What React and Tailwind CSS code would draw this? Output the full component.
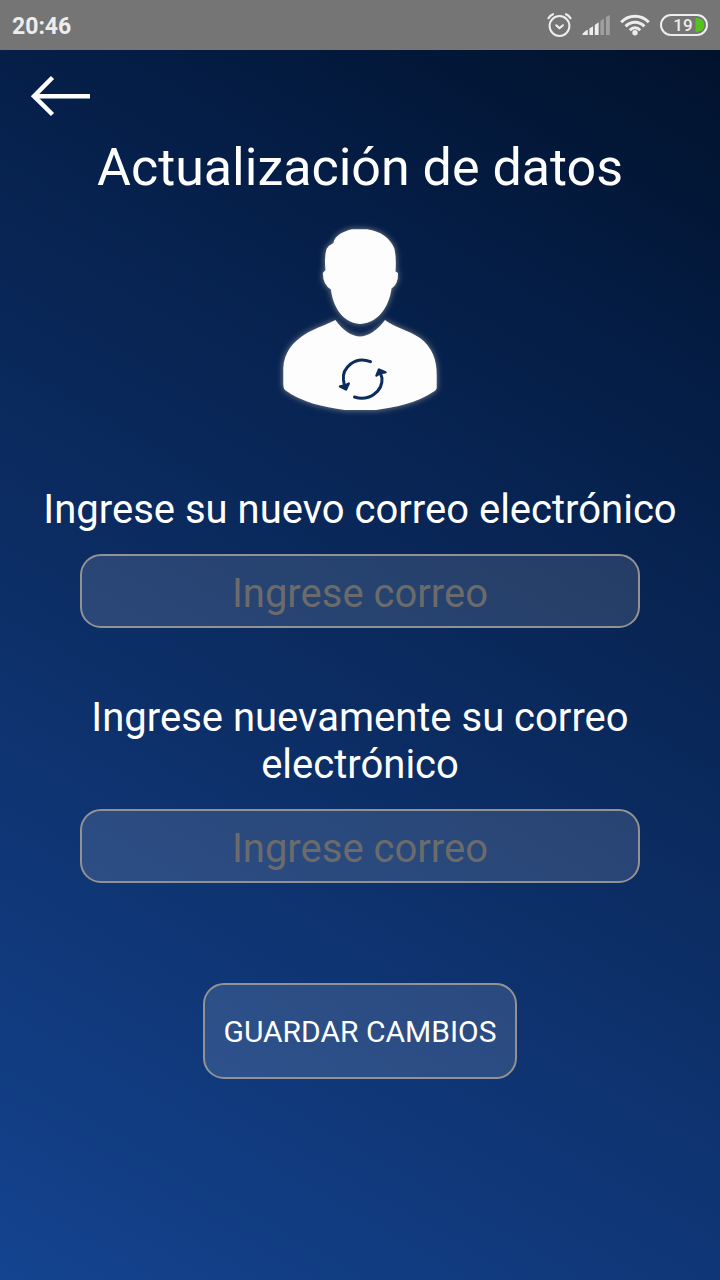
import React from "react";

function AlarmIcon() {
  return (
    <svg width="26" height="26" viewBox="0 0 26 26" fill="none" stroke="#ededed" strokeLinecap="round" aria-hidden="true">
      <circle cx="13.500" cy="14" r="9.900" strokeWidth="2" />
      <path d="M10.300 13.300l3.200 3 3.400-3" strokeWidth="2.200" strokeLinejoin="round" />
      <path d="M2.500 6.200Q4 3.500 7 2.200M24.500 6.200Q23 3.500 20 2.200" strokeWidth="2.200" />
    </svg>
  );
}

function SignalIcon() {
  return (
    <svg width="28" height="20" viewBox="0 0 28 20" aria-hidden="true">
      <path d="M0.500 20v-1.200L4 15.600 5.800 14.800v5.200zM7.400 20v-6.400L11 11.200V20zM12.800 20V10L16.600 7.200V20z" fill="#ededed" />
      <path d="M18.400 20V6L21.900 3.600V20zM24 20V2L27.800 0v20z" fill="#a0a0a0" />
    </svg>
  );
}

function WifiIcon() {
  return (
    <svg width="30" height="22" viewBox="0 0 30 22" fill="none" stroke="#ededed" strokeWidth="3" aria-hidden="true">
      <path d="M1.200 8.200C8.800 .2 21.200 .2 28.800 8.200" />
      <path d="M5.600 12.400C10.800 7 19.200 7 24.400 12.400" />
      <path d="M9.800 16.200C12.800 13 17.200 13 20.200 16.200" />
      <circle cx="15" cy="18.700" r="2.700" fill="#ededed" stroke="none" />
    </svg>
  );
}

function BatteryIcon() {
  return (
    <svg width="48" height="22" viewBox="0 0 48 22" role="img" aria-label="19">
      <rect x="1" y="1" width="46" height="20" rx="10" fill="none" stroke="#ededed" strokeWidth="2" />
      <path d="M35.500 4H37q7.300 1 7.300 7T37 18h-1.500z" fill="#55c41a" />
      <text x="23" y="17" textAnchor="middle" fontFamily="Roboto, sans-serif" fontSize="17" fontWeight="500" fill="#ededed">19</text>
    </svg>
  );
}

function StatusBar() {
  return (
    <div className="flex h-[50px] items-center justify-between bg-[#757575] px-3 font-bold text-[#ededed]">
      <span className="pt-1 text-[23px] leading-8">20:46</span>
      <div className="flex items-center gap-[10px]">
        <AlarmIcon />
        <SignalIcon />
        <WifiIcon />
        <BatteryIcon />
      </div>
    </div>
  );
}

function UserUpdateIcon() {
  return (
    <svg width="180" height="205" viewBox="0 0 180 205" className="mx-auto block" aria-hidden="true">
      <defs>
        <filter id="glow" x="-10%" y="-10%" width="120%" height="120%">
          <feDropShadow dx="0" dy="0" stdDeviation="3" floodColor="#d8cbb8" floodOpacity="0.6" />
        </filter>
      </defs>
      <g fill="#fdfdfd" filter="url(#glow)">
        <path d="M82 14.300H97C111 16 121 24 124.500 34Q126.500 43 125.500 56.500L128 58Q128.500 69 121.500 73.500C120 87 111 108 90 109C71 108 62 88 61 74.500Q53 70 52.800 58L55.500 55Q54 42 56.500 34Q59 30 63.500 28C64 21 74 16 82 14.300Z" />
        <path d="M65.500 105C72 115 82 121.500 90 121.500S108 115 115 105C124 112 138 115 150 123C162 132 167 145 166.700 160V172Q167 175 163 177C147 188 126 192 106 195H75C53 192 31 187 15 175Q13 173 13.300 166V153C14 138 22 127 37 118C48 112 56 110 65.500 105Z" />
      </g>
      <g stroke="#0d2c5e" strokeWidth="3" fill="none" strokeLinecap="round">
        <path d="M100.500 146.700C85 140.500 72 153 73.500 165L74.500 171" />
        <path d="M84.500 182C99 187 113 176 112 163L109.500 155.500" />
      </g>
      <g fill="#0d2c5e" stroke="#0d2c5e" strokeWidth="2.400" strokeLinejoin="round" strokeLinecap="round">
        <path d="M70 171.500L76 174.500 78.800 168.500 75 170.500Z" />
        <path d="M106.500 160.500L109 154.500 115.500 157.300 110.500 158Z" />
      </g>
    </svg>
  );
}

function EmailField({ id, label }) {
  return (
    <div className="flex flex-col gap-[21px]">
      <label htmlFor={id} className="px-10 text-center text-[40px] leading-[47px]">
        {label}
      </label>
      <div className="px-20">
        <input
          id={id}
          type="email"
          placeholder="Ingrese correo"
          className="block h-[74px] w-full rounded-[21px] border-2 border-[#929292] bg-white/12 px-5 pt-1 text-center text-[40px] text-white outline-none placeholder:text-[#6b6b6b]"
        />
      </div>
    </div>
  );
}

export default function App() {
  return (
    <div className="flex min-h-screen flex-col font-[Roboto,sans-serif] text-white">
      <StatusBar />
      <main className="flex-1 bg-[linear-gradient(30deg,#14438f_0%,#0b2b60_50%,#051f49_75%,#01122c_100%)] pb-12">
        <div className="flex px-[30px] pt-[25px]">
          <button type="button" aria-label="Volver">
            <svg width="60" height="42" viewBox="0 0 60 42" fill="none" stroke="#fff" strokeWidth="4.500" aria-hidden="true">
              <path d="M60 21.300H4" />
              <path d="M22.500 2.500L4 21.200 22.500 39.500" />
            </svg>
          </button>
        </div>
        <h1 className="mt-5 text-center text-[52px] leading-[62px]">Actualización de datos</h1>
        <div className="mt-4">
          <UserUpdateIcon />
        </div>
        <form className="mt-[66px] flex flex-col" onSubmit={(e) => e.preventDefault()}>
          <div className="flex flex-col gap-[66px]">
            <EmailField id="email" label="Ingrese su nuevo correo electrónico" />
            <EmailField id="email-confirm" label="Ingrese nuevamente su correo electrónico" />
          </div>
          <button
            type="submit"
            className="mx-auto mt-[100px] h-24 rounded-[21px] border-2 border-[#929292] bg-white/12 px-[18px] text-[30px]"
          >
            GUARDAR CAMBIOS
          </button>
        </form>
      </main>
    </div>
  );
}
